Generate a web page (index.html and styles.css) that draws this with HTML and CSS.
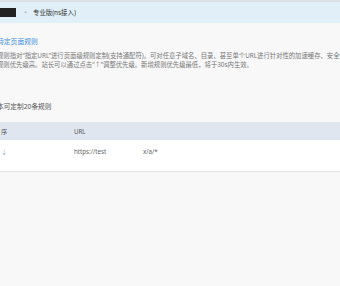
FILE: index.html
```html
<!DOCTYPE html>
<html lang="zh-CN">
<head>
    <meta charset="UTF-8">
    <meta name="viewport" content="width=device-width, initial-scale=1.0">
    <title>特定页面规则</title>
    <link rel="stylesheet" href="styles.css">
</head>
<body>
    <div class="topbar">
        <span class="mask"></span>
        <span class="chev">&#8964;</span>
        <span class="edition">专业版(ns接入)</span>
    </div>

    <div class="content">
        <div class="title">特定页面规则</div>
        <p class="desc">规则指对“指定URL”进行页面级规则定制(支持通配符)。可对任意子域名、目录、甚至单个URL进行针对性的加速缓存、安全<br>规则优先级高。站长可以通过点击“↑”调整优先级。新增规则优先级最低，将于30s内生效。</p>

        <div class="quota">本可定制20条规则</div>

        <table class="rules">
            <thead>
                <tr>
                    <th class="col-order">序</th>
                    <th>URL</th>
                </tr>
            </thead>
            <tbody>
                <tr>
                    <td class="col-order"><span class="arrow">↓</span></td>
                    <td><span class="url-a">https://test</span><span class="url-b">x/a/*</span></td>
                </tr>
            </tbody>
        </table>
    </div>
</body>
</html>
```

FILE: styles.css
```css
body {
    margin: 0;
    padding: 0;
    background: #f8f8f8;
    font-family: "Noto Sans", "Noto Sans CJK SC", sans-serif;
    font-size: 6.2px;
    color: #666;
    overflow: hidden;
}

.topbar {
    height: 21px;
    border-top: 2px solid #dcdfe3;
    background: #e1eff8;
    display: flex;
    align-items: center;
}

.mask {
    width: 16px;
    height: 9px;
    background: #222;
}

.chev {
    margin-left: 7px;
    color: #888;
    font-size: 6px;
    line-height: 1;
    margin-top: -4px;
}

.edition {
    margin-left: 5px;
    font-size: 6.4px;
    color: #333;
}

.content {
    margin-left: -3px;
    padding-top: 14px;
}

.title {
    color: #3d8fe0;
    font-size: 6.8px;
    line-height: 9px;
}

.desc {
    margin: 6px 0 0;
    font-size: 6.35px;
    line-height: 8.6px;
    color: #777;
    white-space: nowrap;
}

.quota {
    margin-top: 33px;
    font-size: 6.7px;
    line-height: 9px;
    color: #555;
}

.rules {
    margin-top: 11px;
    width: 343px;
    border-collapse: collapse;
}

.rules th {
    height: 18px;
    padding: 0;
    background: #e0e6ef;
    text-align: left;
    font-weight: normal;
    color: #555;
}

.rules td {
    padding: 7px 0 15px;
    line-height: 9px;
    vertical-align: top;
    background: #fff;
    border-bottom: 1px solid #e4e4e4;
    color: #666;
}

.col-order {
    width: 73px;
    padding-left: 4px !important;
}

.arrow {
    color: #7fa7d4;
}

.url-a {
    display: inline-block;
    width: 69px;
}
```
